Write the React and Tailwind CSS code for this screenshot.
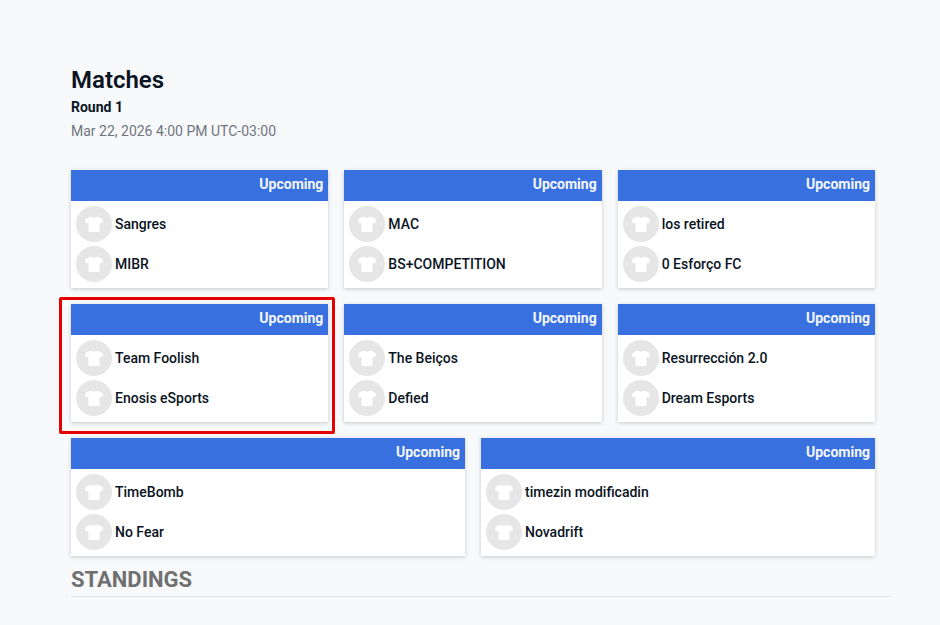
const matches = [
    { teams: ['Sangres', 'MIBR'], span: 'col-span-2' },
    { teams: ['MAC', 'BS+COMPETITION'], span: 'col-span-2' },
    { teams: ['los retired', '0 Esforço FC'], span: 'col-span-2' },
    { teams: ['Team Foolish', 'Enosis eSports'], span: 'col-span-2', highlight: true },
    { teams: ['The Beiços', 'Defied'], span: 'col-span-2' },
    { teams: ['Resurrección 2.0', 'Dream Esports'], span: 'col-span-2' },
    { teams: ['TimeBomb', 'No Fear'], span: 'col-span-3' },
    { teams: ['timezin modificadin', 'Novadrift'], span: 'col-span-3' },
]

function Shirt() {
    return (
        <svg width="18" height="16" viewBox="0 0 18 16" fill="#ffffff">
            <path d="M5.5 0.5 C6.5 2 11.5 2 12.5 0.5 L17.5 3 C18 3.5 18 5 17.3 7 L14.5 7 L14.5 14.5 C14.5 15.5 14 16 13 16 L5 16 C4 16 3.5 15.5 3.5 14.5 L3.5 7 L0.7 7 C0 5 0 3.5 0.5 3 Z" />
        </svg>
    )
}

function TeamRow({ name }) {
    return (
        <div className="flex items-center h-9 mb-1 last:mb-0">
            <div className="flex items-center justify-center w-9 h-9 rounded-full bg-[#e6e6e6] shrink-0">
                <Shirt />
            </div>
            <span className="ml-[3px] text-sm font-medium text-[#0a1423]">{name}</span>
        </div>
    )
}

function MatchCard({ teams, span, highlight }) {
    return (
        <div className={`relative ${span}`}>
            {highlight && <div className="absolute top-[-7px] left-[-12px] right-[-7px] bottom-[-12px] border-[3px] border-[#e60000] rounded-[2px] z-10" />}
            <div className="h-[118px] bg-white shadow-[0_1px_4px_rgba(0,0,0,0.2)]">
                <div className="flex items-center justify-end h-[31px] pr-[5px] pb-[3px] bg-[#3970e0] text-sm font-bold text-[#f4f7fe]">
                    Upcoming
                </div>
                <div className="pt-[5px] px-[5px]">
                    {teams.map((t) => <TeamRow key={t} name={t} />)}
                </div>
            </div>
        </div>
    )
}

export default function App() {
    return (
        <div className="h-[625px] overflow-hidden bg-[#f8f9fb] pt-[65px] pl-[71px] pr-[50px] font-['Roboto',sans-serif]">
            <h1 className="text-2xl leading-[30px] font-semibold text-[#0a1423]">Matches</h1>
            <p className="mt-[2px] text-sm leading-5 font-bold text-[#0a1423]">Round 1</p>
            <p className="mt-1 text-sm leading-5 text-[#6f7680]">Mar 22, 2026 4:00 PM UTC-03:00</p>
            <div className="grid grid-cols-6 gap-4 w-[804px] mt-[29px]">
                {matches.map((m) => <MatchCard key={m.teams[0]} {...m} />)}
            </div>
            <h2 className="mt-[10px] pb-[2px] text-[22px] leading-7 font-bold text-[#707070] border-b border-[#e2e3e6]">STANDINGS</h2>
        </div>
    )
}
